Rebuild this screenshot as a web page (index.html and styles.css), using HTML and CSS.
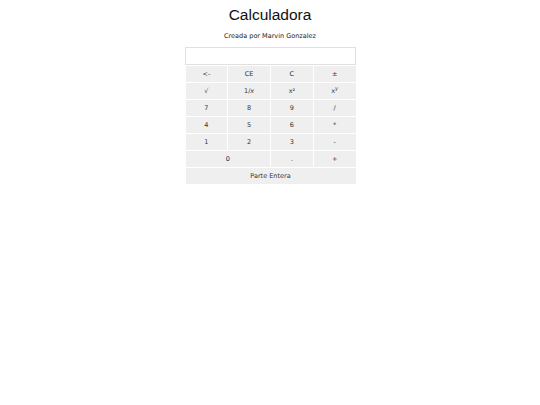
FILE: index.html
```html
<!DOCTYPE html>
<html lang="es">
<head>
<meta charset="utf-8">
<title>Calculadora</title>
<link rel="stylesheet" href="styles.css">
</head>
<body>
<main class="app">
  <h1 class="title">Calculadora</h1>
  <p class="subtitle">Creada por Marvin Gonzalez</p>
  <div class="calc">
    <input class="display" type="text" value="">
    <div class="keys">
      <button class="key">&lt;-</button>
      <button class="key">CE</button>
      <button class="key">C</button>
      <button class="key">±</button>
      <button class="key">√</button>
      <button class="key">1/<i>x</i></button>
      <button class="key">x²</button>
      <button class="key">x<sup class="sup">y</sup></button>
      <button class="key">7</button>
      <button class="key">8</button>
      <button class="key">9</button>
      <button class="key">/</button>
      <button class="key">4</button>
      <button class="key">5</button>
      <button class="key">6</button>
      <button class="key">*</button>
      <button class="key">1</button>
      <button class="key">2</button>
      <button class="key">3</button>
      <button class="key">-</button>
      <button class="key span2">0</button>
      <button class="key">.</button>
      <button class="key">+</button>
      <button class="key span4">Parte Entera</button>
    </div>
  </div>
</main>
</body>
</html>
```

FILE: styles.css
```css
html, body {
  margin: 0;
  padding: 0;
  background: #ffffff;
}

.app {
  display: flex;
  flex-direction: column;
  align-items: center;
  font-family: "DejaVu Sans", Verdana, sans-serif;
  color: #222;
}

.title {
  margin: 6px 0 0 0;
  font-family: "Liberation Sans", Arial, sans-serif;
  font-weight: normal;
  font-size: 15.5px;
  line-height: 18px;
  color: #111;
}

.subtitle {
  margin: 8px 0 0 0;
  font-size: 6.5px;
  line-height: 8px;
  color: #222;
}

.calc {
  margin-top: 7px;
  width: 171px;
  display: flex;
  flex-direction: column;
}

.display {
  box-sizing: border-box;
  width: 171px;
  height: 18px;
  margin: 0;
  padding: 0 3px;
  border: 1px solid #e0e0e0;
  background: #fff;
  outline: none;
}

.keys {
  display: grid;
  grid-template-columns: repeat(4, 1fr);
  grid-auto-rows: 16px;
  gap: 1px;
  padding: 1px 0 0 1px;
}

.key {
  margin: 0;
  padding: 0;
  border: none;
  background: #efefef;
  font-family: "DejaVu Sans", Verdana, sans-serif;
  font-size: 6.5px;
  line-height: 16px;
  color: #333;
  text-align: center;
}

.sup {
  font-size: 5px;
  line-height: 0;
  vertical-align: 3px;
}

.span2 { grid-column: span 2; }
.span4 { grid-column: span 4; }
```
